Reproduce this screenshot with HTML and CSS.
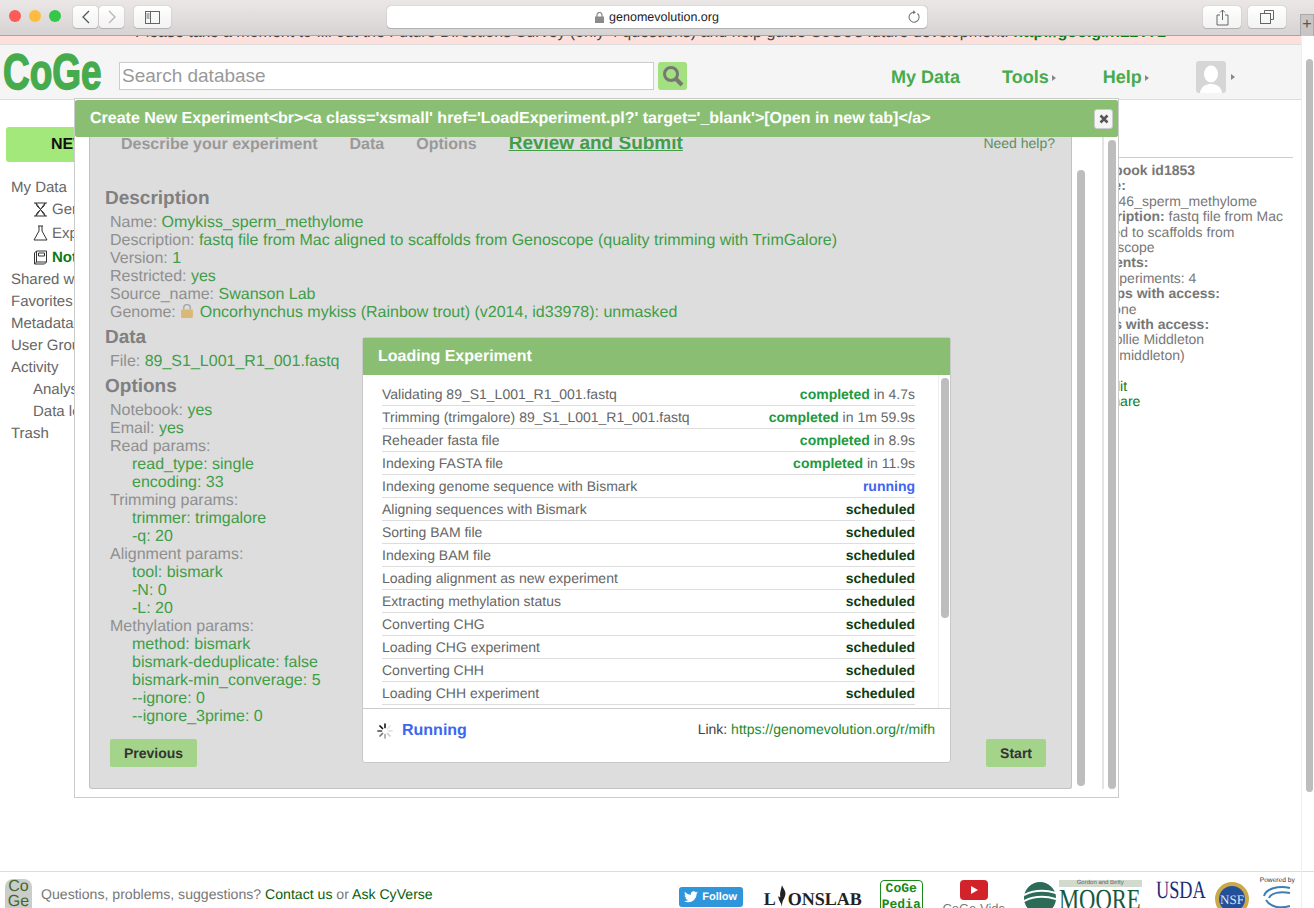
FILE: index.html
```html
<!DOCTYPE html>
<html lang="en">
<head>
  <meta charset="UTF-8">
  <title>CoGe - Create New Experiment</title>
  <link rel="stylesheet" href="styles.css">
</head>
<body>
  <div class="toolbar">
    <div class="lights"><span class="light red"></span><span class="light yellow"></span><span class="light green"></span></div>
    <div class="nav-pair">
      <span class="tool-btn nav-btn"><svg width="10" height="14" viewBox="0 0 10 14"><path d="M8 1L2 7l6 6" fill="none" stroke="#555" stroke-width="1.3"/></svg></span>
      <span class="tool-btn nav-btn"><svg width="10" height="14" viewBox="0 0 10 14"><path d="M2 1l6 6-6 6" fill="none" stroke="#b5b5b5" stroke-width="1.3"/></svg></span>
    </div>
    <span class="tool-btn side-btn"><svg width="15" height="13" viewBox="0 0 15 13"><rect x=".5" y=".5" width="14" height="12" fill="none" stroke="#666"/><path d="M5.5 .5v12M1.5 3h3M1.5 5h3M1.5 7h3" stroke="#666" fill="none"/></svg></span>
    <div class="address">
      <svg class="lock" width="9" height="11" viewBox="0 0 9 11"><rect y="4.5" width="9" height="6.5" fill="#8a8a8a"/><path d="M2 5V3a2.5 2.5 0 0 1 5 0v2" fill="none" stroke="#8a8a8a" stroke-width="1.2"/></svg>
      <span>genomevolution.org</span>
      <svg class="reload" width="13" height="14" viewBox="0 0 13 14"><path d="M9.5 3.5a5 5 0 1 1-4-1.3" fill="none" stroke="#777" stroke-width="1.1"/><path d="M5 .3l3 2-3 2z" fill="#777"/></svg>
    </div>
    <span class="tool-btn right-btn"><svg width="13" height="17" viewBox="0 0 13 17"><path d="M4 6H1v10h11V6H9M6.5 11V1M4 3.5L6.5 1 9 3.5" fill="none" stroke="#666"/></svg></span>
    <span class="tool-btn right-btn"><svg width="14" height="14" viewBox="0 0 14 14"><path d="M4.5 3.500v-3h9v9h-3" fill="none" stroke="#666"/><rect x=".5" y="3.5" width="10" height="10" fill="none" stroke="#666"/></svg></span>
    <span class="new-tab">+</span>
  </div>

  <div class="window">
    <div class="site">
      <div class="banner">Please take a moment to fill out the Future Directions Survey (only 4 questions) and help guide CoGe's future development: <a href="#">http://goo.gl/nL2T72</a></div>

      <header class="site-header">
        <div class="logo"><span>CoGe</span></div>
        <input class="search" type="text" placeholder="Search database">
        <span class="search-btn"><svg width="24" height="24" viewBox="0 0 24 24"><circle cx="10" cy="10" r="6.5" fill="none" stroke="#777" stroke-width="3"/><path d="M15 15l6 6" stroke="#777" stroke-width="4"/></svg></span>
        <nav class="main-nav">
          <a href="#" class="my-data">My Data</a>
          <a href="#" class="tools">Tools<i class="caret"></i></a>
          <a href="#" class="help">Help<i class="caret"></i></a>
          <span class="avatar"><svg width="30" height="32" viewBox="0 0 30 32"><rect width="30" height="32" rx="3" fill="#d6d6d6"/><ellipse cx="15" cy="13" rx="7" ry="8.5" fill="#fff"/><path d="M4 32c1-7 6-9 11-9s10 2 11 9z" fill="#fff"/></svg><i class="caret"></i></span>
        </nav>
      </header>

      <main class="content">
        <aside class="sidebar">
          <div class="new-btn">NEW</div>
          <ul class="side-list">
            <li>My Data</li>
            <li class="sub"><svg width="15" height="15" viewBox="0 0 15 15"><path d="M1 1h13M1 14h13M3 1c0 4 4 5 4.5 6.5C7 9 3 10 3 14M12 1c0 4-4 5-4.5 6.5C8 9 12 10 12 14M3 1l9 13M12 1L3 14" fill="none" stroke="#333"/></svg>Genomes</li>
            <li class="sub"><svg width="15" height="16" viewBox="0 0 15 16"><path d="M5 1h5M6 1v5L1 15h13L9 6V1" fill="none" stroke="#333"/></svg>Experiments</li>
            <li class="sub current"><svg width="15" height="15" viewBox="0 0 15 15"><path d="M3.5 1h10v11h-10zM3.5 12l-2 2h10l2-2M3.5 1l-2 2v11M5.5 3h6v3h-6z" fill="none" stroke="#333"/></svg>Notebooks</li>
            <li>Shared with me</li>
            <li>Favorites</li>
            <li>Metadata</li>
            <li>User Groups</li>
            <li>Activity</li>
            <li class="sub plain">Analyses</li>
            <li class="sub plain">Data loading</li>
            <li>Trash</li>
          </ul>
        </aside>

        <section class="info">
          <p><b>Notebook id1853</b></p>
          <p><b>Name:</b></p>
          <p class="ind">1846_sperm_methylome</p>
          <p><b>Description:</b> fastq file from Mac</p>
          <p>aligned to scaffolds from</p>
          <p>Genoscope</p>
          <p><b>Contents:</b></p>
          <p class="ind">Experiments: 4</p>
          <p><b>Groups with access:</b></p>
          <p class="ind">None</p>
          <p><b>Users with access:</b></p>
          <p class="ind">Mollie Middleton</p>
          <p class="ind">(mmiddleton)</p>
          <p><b>Tool:</b></p>
          <p class="ind"><a href="#">Edit</a></p>
          <p class="ind"><a href="#">Share</a></p>
        </section>
      </main>

      <footer class="site-footer">
        <div class="foot-logo">Co<br>Ge</div>
        <p class="foot-text">Questions, problems, suggestions? <a href="#">Contact us</a> or <a href="#">Ask CyVerse</a></p>
        <div class="sponsors">
          <span class="follow"><svg width="14" height="12" viewBox="0 0 24 20"><path d="M24 2.400c-.9.400-1.800.700-2.800.800 1-.600 1.800-1.600 2.200-2.700-1 .6-2 1-3.100 1.200A4.900 4.900 0 0 0 11.900 6.200C7.800 6 4.200 4 1.700.9c-1.300 2.200-.6 5.100 1.500 6.500-.8 0-1.600-.2-2.200-.6 0 2.400 1.700 4.400 3.900 4.900-.7.200-1.500.2-2.200.1.600 2 2.400 3.400 4.600 3.400A9.900 9.900 0 0 1 0 16.800 14 14 0 0 0 7.500 19c9.100 0 14.300-7.700 14-14.600 1-.7 1.800-1.500 2.500-2z" fill="#fff"/></svg>Follow</span>
          <span class="lyons">L<svg width="12" height="27" viewBox="0 0 14 26"><path d="M7 0c2 5 6 8 3 14-1 3-3 4-3 11-1-6-5-8-4-13 1 2 2 2 2 2C4 9 6 5 7 0z" fill="#222"/></svg>ONSLAB</span>
          <span class="pedia">CoGe<br>Pedia</span>
          <span class="vids"><svg width="28" height="20" viewBox="0 0 28 20"><rect width="28" height="20" rx="4" fill="#d2232a"/><path d="M11 6l7 4-7 4z" fill="#fff"/></svg><span>CoGe Vids</span></span>
          <span class="moore">
            <svg width="32" height="36" viewBox="0 0 32 36"><circle cx="16" cy="18" r="16" fill="#2b6b57"/><path d="M0 15c10-5 22-5 32-2M0 21c10-5 22-5 32-2" stroke="#fff" stroke-width="2" fill="none"/></svg>
            <span class="moore-text"><small>Gordon and Betty</small><span>MOORE</span></span>
          </span>
          <span class="usda"><span>USDA</span></span>
          <svg class="nsf" width="36" height="38" viewBox="0 0 36 38"><circle cx="18" cy="20" r="17" fill="#c9a94a"/><circle cx="18" cy="20" r="13" fill="#24509a"/><text x="18" y="25" text-anchor="middle" font-family="Liberation Serif" font-size="13" fill="#dfe6f5">NSF</text></svg>
          <span class="powered"><small>Powered by</small><svg width="30" height="28" viewBox="0 0 30 28"><path d="M28 4C16 1 4 5 2 12M28 9C18 7 9 9 7 14M4 16c4 7 14 9 24 6" fill="none" stroke="#3b7fb6" stroke-width="2"/></svg></span>
        </div>
      </footer>
    </div>

    <div class="page-scroll"><span class="thumb"></span></div>

    <div class="dialog">
      <div class="dialog-title">
        <span>Create New Experiment&lt;br&gt;&lt;a class='xsmall' href='LoadExperiment.pl?' target='_blank'&gt;[Open in new tab]&lt;/a&gt;</span>
        <span class="close"><svg width="10" height="10" viewBox="0 0 10 10"><path d="M1.5 1.5l7 7M8.5 1.5l-7 7" stroke="#555" stroke-width="2.6"/></svg></span>
      </div>
      <div class="dialog-body">
        <div class="wizard">
          <div class="tabs">
            <span class="tab">Describe your experiment</span>
            <span class="tab">Data</span>
            <span class="tab">Options</span>
            <a href="#" class="tab active">Review and Submit</a>
            <span class="need-help">Need help?</span>
          </div>

          <h3 class="first">Description</h3>
          <div class="rows">
            <div>Name: <em>Omykiss_sperm_methylome</em></div>
            <div>Description: <em>fastq file from Mac aligned to scaffolds from Genoscope (quality trimming with TrimGalore)</em></div>
            <div>Version: <em>1</em></div>
            <div>Restricted: <em>yes</em></div>
            <div>Source_name: <em>Swanson Lab</em></div>
            <div>Genome: <svg class="padlock" width="14" height="14" viewBox="0 0 13 13"><rect x="1" y="5" width="11" height="8" rx="1" fill="#d9b878"/><path d="M3.5 5V3.500a3 3 0 0 1 6 0V5" fill="none" stroke="#a9a9a9" stroke-width="1.3"/></svg> <em>Oncorhynchus mykiss (Rainbow trout) (v2014, id33978): unmasked</em></div>
          </div>
          <h3>Data</h3>
          <div class="rows">
            <div>File: <em>89_S1_L001_R1_001.fastq</em></div>
          </div>
          <h3>Options</h3>
          <div class="rows">
            <div>Notebook: <em>yes</em></div>
            <div>Email: <em>yes</em></div>
            <div>Read params:</div>
            <div class="nest"><em>read_type: single</em></div>
            <div class="nest"><em>encoding: 33</em></div>
            <div>Trimming params:</div>
            <div class="nest"><em>trimmer: trimgalore</em></div>
            <div class="nest"><em>-q: 20</em></div>
            <div>Alignment params:</div>
            <div class="nest"><em>tool: bismark</em></div>
            <div class="nest"><em>-N: 0</em></div>
            <div class="nest"><em>-L: 20</em></div>
            <div>Methylation params:</div>
            <div class="nest"><em>method: bismark</em></div>
            <div class="nest"><em>bismark-deduplicate: false</em></div>
            <div class="nest"><em>bismark-min_converage: 5</em></div>
            <div class="nest"><em>--ignore: 0</em></div>
            <div class="nest"><em>--ignore_3prime: 0</em></div>
          </div>
          <div class="wizard-btns">
            <span class="btn">Previous</span>
            <span class="btn">Start</span>
          </div>
        </div>
        <div class="gutter"><span class="bar inner-bar"></span></div>
        <div class="gutter second"><span class="bar outer-bar"></span></div>
      </div>

      <div class="loading">
        <div class="loading-title">Loading Experiment</div>
        <div class="loading-list">
          <ul class="tasks">
            <li>Validating 89_S1_L001_R1_001.fastq<span><b class="done">completed</b> in 4.7s</span></li>
            <li>Trimming (trimgalore) 89_S1_L001_R1_001.fastq<span><b class="done">completed</b> in 1m 59.9s</span></li>
            <li>Reheader fasta file<span><b class="done">completed</b> in 8.9s</span></li>
            <li>Indexing FASTA file<span><b class="done">completed</b> in 11.9s</span></li>
            <li>Indexing genome sequence with Bismark<span><b class="run">running</b></span></li>
            <li>Aligning sequences with Bismark<span><b class="sched">scheduled</b></span></li>
            <li>Sorting BAM file<span><b class="sched">scheduled</b></span></li>
            <li>Indexing BAM file<span><b class="sched">scheduled</b></span></li>
            <li>Loading alignment as new experiment<span><b class="sched">scheduled</b></span></li>
            <li>Extracting methylation status<span><b class="sched">scheduled</b></span></li>
            <li>Converting CHG<span><b class="sched">scheduled</b></span></li>
            <li>Loading CHG experiment<span><b class="sched">scheduled</b></span></li>
            <li>Converting CHH<span><b class="sched">scheduled</b></span></li>
            <li>Loading CHH experiment<span><b class="sched">scheduled</b></span></li>
          </ul>
          <div class="list-scroll"><span class="bar"></span></div>
        </div>
        <div class="loading-foot">
          <svg class="spinner" width="16" height="16" viewBox="0 0 16 16">
            <g stroke-width="1.7" stroke-linecap="round">
              <path d="M8 1v3.5" stroke="#222"/>
              <path d="M3 3l2.5 2.5" stroke="#111"/>
              <path d="M1 8h3.5" stroke="#444"/>
              <path d="M3 13l2.5-2.5" stroke="#777"/>
              <path d="M8 15v-3.5" stroke="#aaa"/>
              <path d="M13 13l-2.5-2.5" stroke="#ccc"/>
              <path d="M15 8h-3.5" stroke="#ddd"/>
              <path d="M13 3l-2.5 2.5" stroke="#e5e5e5"/>
            </g>
          </svg>
          <span class="running">Running</span>
          <span class="link">Link: <a href="#">https://genomevolution.org/r/mifh</a></span>
        </div>
      </div>
    </div>
  </div>
</body>
</html>
```

FILE: styles.css
```css
/* Reset some defaults */
body, h3, p, ul { margin: 0; padding: 0; }

html, body { height: 100%; }

body {
  font-family: 'Liberation Sans', Arial, sans-serif;
  font-size: 14px;
  color: #666;
  background: #fff;
  overflow: hidden;
  display: flex;
  flex-direction: column;
  text-rendering: geometricPrecision;
}

a { text-decoration: none; }

/* Browser toolbar */
.toolbar {
  position: relative;
  z-index: 3;
  flex: none;
  height: 29px;
  display: flex;
  align-items: flex-start;
  padding-top: 6px;
  background: linear-gradient(#ebe7e7, #d8d3d3);
  border-bottom: 1px solid #a9a5a5;
}

.lights { display: flex; gap: 8px; margin: 4px 0 0 9px; }
.light { width: 12px; height: 12px; border-radius: 50%; }
.red { background: #fc5b57; }
.yellow { background: #fdbc40; }
.green { background: #34c84a; }

.tool-btn {
  height: 22px;
  background: linear-gradient(#fff, #f4f2f2);
  border-radius: 4px;
  box-shadow: 0 0 1px rgba(0,0,0,0.45), 0 1px 0 #bbb;
  display: flex;
  align-items: center;
  justify-content: center;
}

.nav-pair { display: flex; gap: 1px; margin-left: 12px; }
.nav-btn { width: 25px; }
.side-btn { width: 37px; margin-left: 10px; }

.address {
  position: relative;
  width: 540px;
  height: 22px;
  margin-left: 216px;
  background: #fff;
  border-radius: 4px;
  box-shadow: 0 0 1px rgba(0,0,0,0.45), 0 1px 0 #bbb;
  color: #222;
  font-size: 12.5px;
  display: flex;
  align-items: center;
  justify-content: center;
  gap: 5px;
}

.reload { position: absolute; right: 6px; top: 4px; }

.right-btn { width: 38px; margin-left: 7px; }
.address + .right-btn { margin-left: 276px; }

.new-tab {
  position: absolute;
  right: 0;
  top: 14px;
  width: 14px;
  height: 22px;
  background: #c9c5c5;
  border: 1px solid #aaa;
  border-bottom: none;
  box-sizing: border-box;
  font-size: 16px;
  line-height: 20px;
  text-align: center;
  color: #555;
}

/* Page */
.window {
  position: relative;
  flex: 1;
  min-height: 0;
  display: flex;
}

.site {
  flex: 1;
  min-width: 0;
  display: flex;
  flex-direction: column;
}

.banner {
  flex: none;
  height: 28px;
  margin-top: -19px;
  padding-top: 7px;
  box-sizing: border-box;
  background: #fde0dc;
  border-bottom: 1px solid #ddd;
  text-align: center;
  font-size: 16px;
  line-height: 17px;
  color: #444;
  white-space: nowrap;
  overflow: hidden;
}

.banner a { color: #0a7a16; font-weight: bold; }

.site-header {
  flex: none;
  height: 55px;
  padding-top: 8px;
  box-sizing: border-box;
  display: flex;
  align-items: center;
  background: #f5f5f5;
  border-bottom: 1px solid #ddd;
}

.logo {
  width: 118px;
  margin-top: -8px;
  color: #46ab4d;
  font-size: 50px;
  font-weight: bold;
  line-height: 50px;
}

.logo span {
  display: inline-block;
  transform: scaleX(0.74);
  transform-origin: left center;
  margin-left: 3px;
  -webkit-text-stroke: 1.5px #46ab4d;
}

.search {
  width: 535px;
  height: 28px;
  margin: 0 4px 0 1px;
  padding: 0 2px;
  box-sizing: border-box;
  border: 1px solid #ccc;
  background: #fff;
  font-family: inherit;
  font-size: 19px;
}

.search::placeholder { color: #999; opacity: 1; }

.search-btn {
  width: 29px;
  height: 28px;
  background: #a3e07f;
  border-radius: 3px;
  display: flex;
  align-items: center;
  justify-content: center;
}

.main-nav {
  display: flex;
  align-items: center;
  margin: 2px 0 0 204px;
  font-size: 18px;
  font-weight: bold;
}

.main-nav a { color: #46ab4d; }
.tools { margin-left: 42px; }
.help { margin-left: 47px; }

.caret {
  display: inline-block;
  margin-left: 3px;
  vertical-align: 2px;
  border-left: 4px solid #888;
  border-top: 3px solid transparent;
  border-bottom: 3px solid transparent;
}

.avatar { display: flex; align-items: center; margin-left: 47px; }
.avatar .caret { margin-left: 5px; }

.content {
  flex: 1;
  min-height: 0;
  display: flex;
  justify-content: space-between;
  overflow: hidden;
}

/* Left menu, mostly behind the dialog */
.sidebar { width: 200px; padding: 27px 0 0 6px; box-sizing: border-box; }

.new-btn {
  height: 35px;
  width: 190px;
  background: #a3e87a;
  border-radius: 3px;
  color: #111;
  font-size: 16px;
  font-weight: bold;
  line-height: 35px;
  text-indent: 45px;
}

.side-list { list-style: none; margin: 14px 0 0 5px; }

.side-list li {
  height: 22px;
  display: flex;
  align-items: center;
  font-size: 15px;
  color: #666;
  white-space: nowrap;
}

.side-list .sub { height: 23.67px; padding-left: 22px; gap: 4px; }
.side-list .plain { height: 22px; gap: 0; }
.side-list .current { color: #0a7a16; font-weight: bold; }

/* Notebook info on the right */
.info {
  width: 210px;
  padding: 63px 0 0 0;
  margin-right: 8px;
  background: linear-gradient(#ccc, #ccc) no-repeat 0 57px / 100% 1px;
  font-size: 14px;
  line-height: 15.4px;
  color: #777;
  white-space: nowrap;
}

.info .ind { padding-left: 20px; }
.info a { color: #0a7a16; }

.site-footer {
  flex: none;
  height: 36px;
  display: flex;
  align-items: flex-start;
  border-top: 1px solid #ddd;
  margin-right: -14px;
  overflow: hidden;
}

.foot-logo {
  width: 27px;
  height: 36px;
  margin: 7px 0 0 5px;
  border-radius: 8px;
  background: #ccc;
  color: #3f6b24;
  font-size: 16px;
  line-height: 15px;
  text-align: center;
}

.foot-text { margin: 14px 0 0 9px; color: #777; font-size: 14.1px; white-space: nowrap; }
.foot-text a { color: #0a5c0a; }

.sponsors {
  display: flex;
  align-items: flex-start;
  margin-left: 246px;
}

.follow {
  display: flex;
  align-items: center;
  justify-content: center;
  gap: 4px;
  flex: none;
  width: 64px;
  height: 20px;
  margin-top: 15px;
  background: #2f96dc;
  border-radius: 3px;
  color: #fff;
  font-size: 11px;
  font-weight: bold;
}

.lyons {
  display: flex;
  align-items: flex-end;
  flex: none;
  width: 101px;
  height: 30px;
  margin: 8px 0 0 21px;
  font-family: 'Liberation Serif', serif;
  font-size: 18px;
  font-weight: bold;
  color: #222;
  white-space: nowrap;
}

.lyons svg { flex: none; }

.pedia {
  flex: none;
  width: 43px;
  height: 40px;
  margin: 8px 0 0 15px;
  border: 1px solid #1a8a1a;
  border-radius: 4px;
  box-sizing: border-box;
  color: #1a8a1a;
  font-family: 'Liberation Mono', monospace;
  font-size: 13px;
  font-weight: bold;
  line-height: 16px;
  text-align: center;
}

.vids {
  display: flex;
  flex: none;
  flex-direction: column;
  align-items: center;
  width: 68px;
  margin: 8px 0 0 17px;
  color: #777;
  font-size: 13px;
  line-height: 18px;
  white-space: nowrap;
}

.moore { display: flex; flex: none; gap: 3px; margin: 8px 0 0 16px; }

.moore-text {
  display: block;
  width: 83px;
  color: #17583f;
  font-family: 'Liberation Serif', serif;
  font-size: 29px;
  line-height: 26px;
  white-space: nowrap;
}

.moore-text span {
  display: inline-block;
  transform: scaleX(0.78);
  transform-origin: left center;
}

.moore-text small {
  display: block;
  font-family: 'Liberation Sans', sans-serif;
  font-size: 6px;
  line-height: 7px;
  text-align: center;
  color: #666;
  background: #d2dacd;
}

.usda {
  flex: none;
  width: 50px;
  height: 38px;
  margin: 6px 0 0 14px;
  border-bottom: 8px solid #2b6d1f;
  box-sizing: border-box;
  color: #1c2a78;
  font-family: 'Liberation Serif', serif;
  font-size: 25px;
  line-height: 26px;
  white-space: nowrap;
}

.usda span {
  display: inline-block;
  transform: scaleX(0.73);
  transform-origin: left center;
}

.nsf { margin: 7px 0 0 8px; flex: none; }

.powered {
  display: flex;
  flex: none;
  flex-direction: column;
  align-items: center;
  margin: 5px 0 0 10px;
  color: #333;
  font-size: 8px;
  white-space: nowrap;
}

/* Page scrollbar */
.page-scroll {
  flex: none;
  position: relative;
  width: 13px;
  border-left: 1px solid #eee;
  padding: 23px 1px 0 4px;
  box-sizing: border-box;
}

.page-scroll .thumb {
  display: block;
  height: 733px;
  border-radius: 4px;
  background: #bdbdbd;
}

/* Dialog over the page */
.dialog {
  position: absolute;
  left: 74px;
  top: 62px;
  width: 1045px;
  height: 700px;
  box-sizing: border-box;
  background: #fff;
  border: 1px solid #ccc;
  display: flex;
  flex-direction: column;
  z-index: 2;
}

.dialog-title {
  flex: none;
  height: 37px;
  margin-top: 1px;
  display: flex;
  align-items: center;
  justify-content: space-between;
  padding: 0 5px 0 15px;
  background: #8abf73;
  border-radius: 2px;
  color: #fff;
  font-size: 16px;
  font-weight: bold;
  position: relative;
  z-index: 1;
}

.close {
  width: 17px;
  height: 18px;
  background: #f5f5f5;
  border: 1px solid #ccc;
  border-radius: 3px;
  display: flex;
  align-items: center;
  justify-content: center;
}

.dialog-body {
  flex: 1;
  min-height: 0;
  display: flex;
  padding: 0 1px 8px 14px;
}

.wizard {
  width: 983px;
  flex: none;
  box-sizing: border-box;
  background: #dddddd;
  border: 1px solid #c2c2c2;
  border-top: none;
  border-radius: 0 0 3px 3px;
  padding: 0 15px 0 15px;
  overflow: hidden;
  display: flex;
  flex-direction: column;
}

.tabs {
  position: relative;
  display: flex;
  align-items: baseline;
  height: 20px;
  margin-top: -4px;
  padding-left: 16px;
  color: #999;
  font-size: 16px;
  font-weight: bold;
}

.tab { margin-right: 32px; white-space: nowrap; }

.tab.active {
  color: #3f9e47;
  font-size: 19px;
  text-decoration: underline;
}

.need-help {
  position: absolute;
  right: 1px;
  top: 2px;
  color: #5b8f5f;
  font-size: 14px;
  font-weight: normal;
}

.wizard h3 {
  color: #808080;
  font-size: 19px;
  line-height: 22px;
  margin-top: 5px;
}

.wizard h3.first { margin-top: 35px; }

.rows {
  margin-left: 5px;
  font-size: 16px;
  line-height: 18px;
  color: #8f8f8f;
  margin-top: 4px;
  white-space: nowrap;
}

.rows em { font-style: normal; color: #3f9e47; }
.rows .nest { padding-left: 22px; }
.padlock { vertical-align: -1px; margin-right: 1px; }

.wizard-btns {
  display: flex;
  justify-content: space-between;
  margin: 13px 10px 0 5px;
}

.btn {
  padding: 0 14px;
  height: 28px;
  background: #a3d48a;
  border-radius: 2px;
  color: #333;
  font-size: 14px;
  font-weight: bold;
  line-height: 28px;
}

.gutter {
  flex: none;
  width: 31px;
  box-sizing: border-box;
  border-right: 1px solid #e4e4e4;
  padding: 33px 0 0 5px;
}

.gutter.second { width: 14px; border-right: none; padding: 3px 0 0 4px; border-left: 1px solid #e4e4e4; }

.bar {
  display: block;
  width: 8px;
  border-radius: 4px;
  background: #bdbdbd;
}

.inner-bar { height: 616px; }
.outer-bar { height: 649px; }

/* Loading box */
.loading {
  position: absolute;
  left: 287px;
  top: 238px;
  width: 589px;
  height: 426px;
  box-sizing: border-box;
  background: #fff;
  border: 1px solid #c8c8c8;
  border-radius: 3px;
  display: flex;
  flex-direction: column;
  z-index: 1;
}

.loading-title {
  flex: none;
  height: 37px;
  line-height: 37px;
  padding-left: 15px;
  background: #8abf73;
  color: #fff;
  font-size: 16px;
  font-weight: bold;
}

.loading-list {
  flex: none;
  height: 333px;
  display: flex;
  border-bottom: 1px solid #ccc;
  overflow: hidden;
}

.tasks {
  flex: 1;
  list-style: none;
  padding: 8px 23px 0 19px;
}

.tasks li {
  height: 23px;
  box-sizing: border-box;
  border-bottom: 1px solid #ddd;
  display: flex;
  justify-content: space-between;
  line-height: 22px;
  color: #666;
  white-space: nowrap;
}

.done { color: #1d9a3f; }
.run { color: #3d66f0; }
.sched { color: #103c10; }

.list-scroll {
  flex: none;
  width: 12px;
  border-left: 1px solid #eee;
  padding: 3px 0 0 2px;
  box-sizing: border-box;
}

.list-scroll .bar { height: 240px; }

.loading-foot {
  display: flex;
  align-items: flex-start;
  padding: 13px 15px 0 14px;
}

.spinner { margin-top: 1px; }

.running {
  margin-left: 9px;
  color: #3d66f0;
  font-size: 16px;
  font-weight: bold;
}

.link { margin: -1px 0 0 auto; color: #444; }
.link a { color: #1c8a2c; }
```
